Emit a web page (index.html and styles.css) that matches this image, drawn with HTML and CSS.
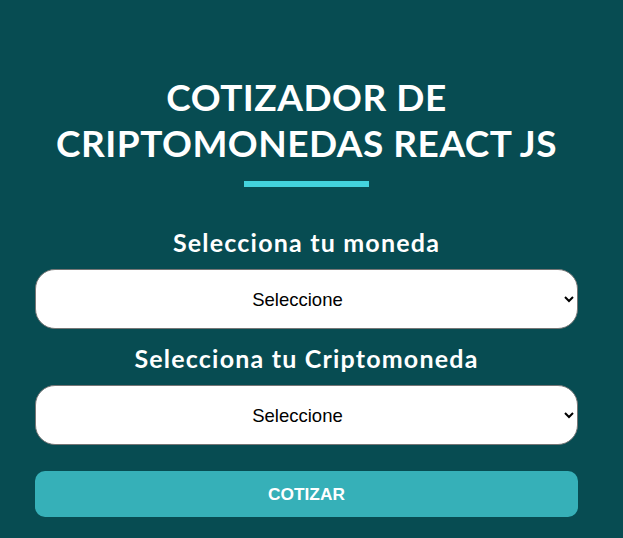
FILE: index.html
```html
<!DOCTYPE html>
<html lang="es">
<head>
<meta charset="utf-8">
<title>Cotizador</title>
<link rel="stylesheet" href="styles.css">
</head>
<body>
<div class="app">
  <h1 class="title">COTIZADOR DE<br>CRIPTOMONEDAS REACT JS</h1>
  <div class="bar"></div>
  <form class="form">
    <label class="label" for="moneda">Selecciona tu moneda</label>
    <select id="moneda" class="select"><option>Seleccione</option></select>
    <label class="label" for="cripto">Selecciona tu Criptomoneda</label>
    <select id="cripto" class="select"><option>Seleccione</option></select>
    <button type="button" class="btn">COTIZAR</button>
  </form>
</div>
</body>
</html>
```
FILE: styles.css
```css
html, body { margin: 0; padding: 0; }
body {
  background: #074c52;
  font-family: "Lato", "Noto Sans", sans-serif;
  color: #fff;
}
.app {
  width: 543px;
  margin-left: 35px;
  padding-top: 74px;
  display: flex;
  flex-direction: column;
  align-items: center;
}
.title {
  margin: 0;
  font-size: 37px;
  line-height: 46px;
  font-weight: 700;
  text-align: center;
  letter-spacing: 0.5px;
}
.bar {
  width: 125px;
  height: 6px;
  background: #43d2dc;
  margin-top: 15px;
}
.form {
  width: 100%;
  display: flex;
  flex-direction: column;
  margin-top: 40px;
}
.label {
  text-align: center;
  font-size: 25px;
  font-weight: 700;
  line-height: 30px;
  letter-spacing: 1.2px;
  margin-bottom: 12px;
}
.select {
  width: 100%;
  height: 60px;
  border-radius: 20px;
  border: 1px solid #767676;
  background: #fff;
  font-family: "Liberation Sans", Arial, sans-serif;
  font-size: 18.5px;
  color: #000;
  text-align: center;
  text-align-last: center;
  padding: 0 10px 0 4px;
  margin-bottom: 14px;
}
.btn {
  margin-top: 12px;
  height: 46px;
  border: none;
  border-radius: 10px;
  background: #36b0b8;
  color: #fff;
  font-family: "Liberation Sans", Arial, sans-serif;
  font-weight: 700;
  font-size: 17.3px;
}
```
